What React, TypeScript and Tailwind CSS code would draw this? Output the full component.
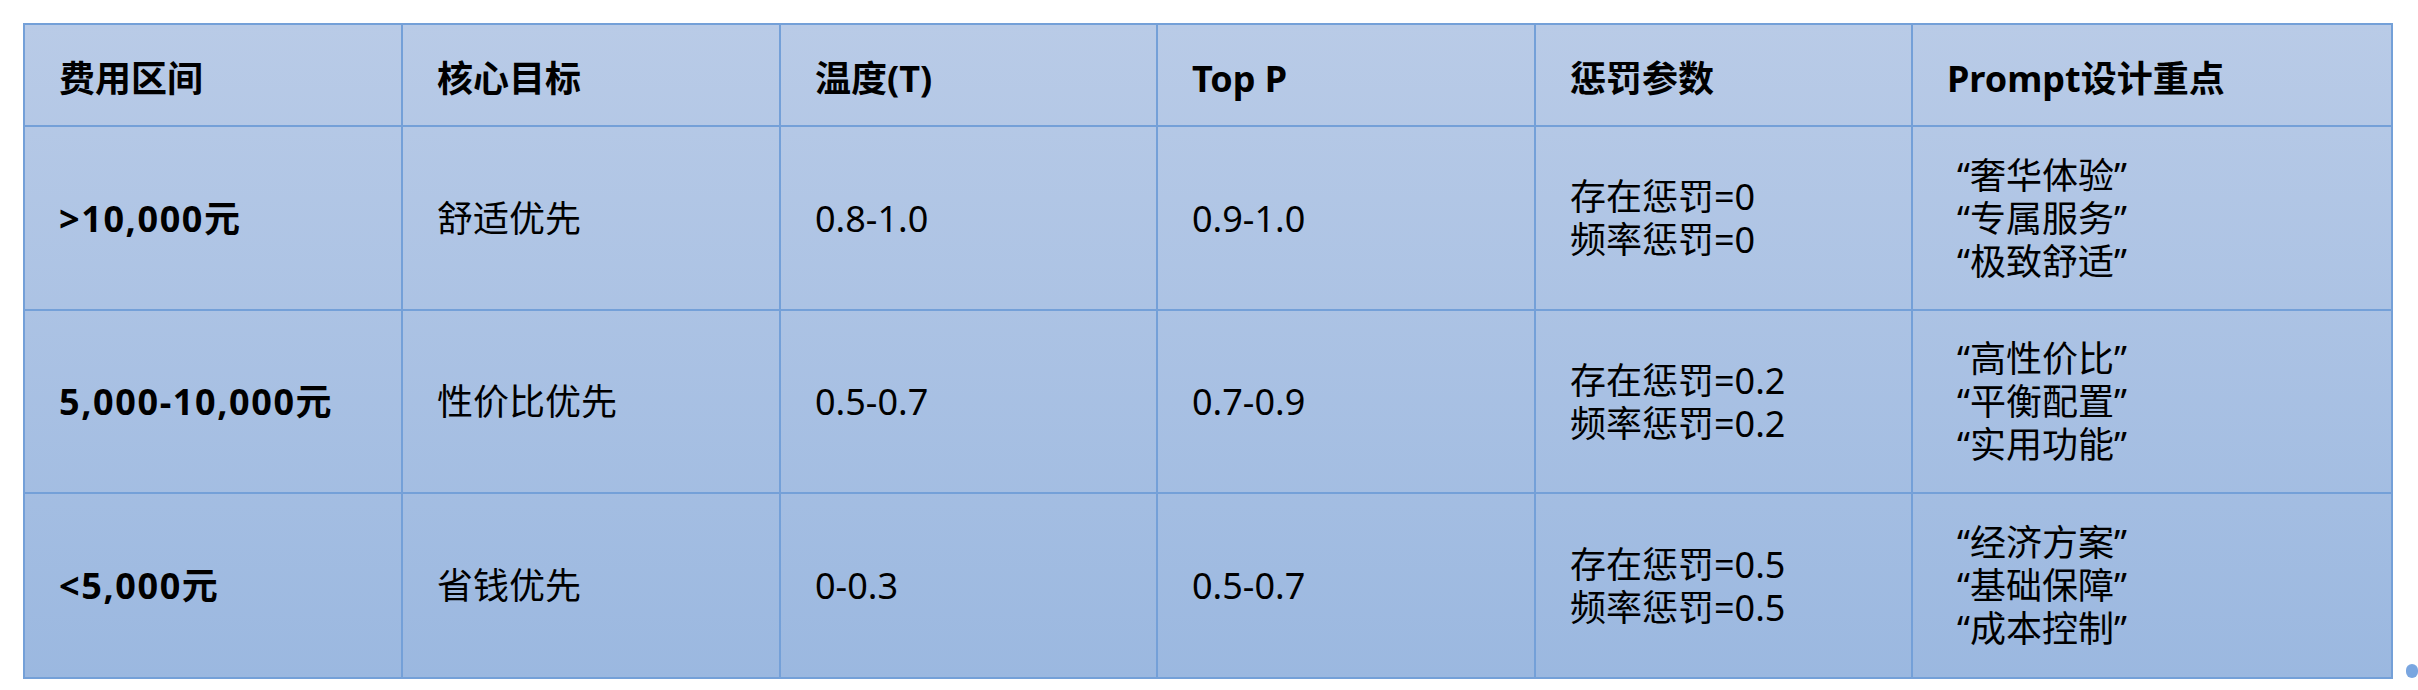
import React from "react";

const headers = ["费用区间", "核心目标", "温度(T)", "Top P", "惩罚参数", "Prompt设计重点"];

const rows = [
  {
    range: ">10,000元",
    goal: "舒适优先",
    temp: "0.8-1.0",
    topP: "0.9-1.0",
    penalty: ["存在惩罚=0", "频率惩罚=0"],
    prompt: ["“奢华体验”", "“专属服务”", "“极致舒适”"],
    h: "h-[184px]",
  },
  {
    range: "5,000-10,000元",
    goal: "性价比优先",
    temp: "0.5-0.7",
    topP: "0.7-0.9",
    penalty: ["存在惩罚=0.2", "频率惩罚=0.2"],
    prompt: ["“高性价比”", "“平衡配置”", "“实用功能”"],
    h: "h-[183px]",
  },
  {
    range: "<5,000元",
    goal: "省钱优先",
    temp: "0-0.3",
    topP: "0.5-0.7",
    penalty: ["存在惩罚=0.5", "频率惩罚=0.5"],
    prompt: ["“经济方案”", "“基础保障”", "“成本控制”"],
    h: "h-[185px]",
  },
];

const cell = "border-2 border-[#74a0d8] pl-[34px] align-middle";

export default function App() {
  return (
    <div className="w-[2418px] h-[690px] overflow-hidden bg-white flex items-start pt-[23px] pl-[23px] font-['Noto_Sans','Noto_Sans_CJK_SC',sans-serif] text-black">
      <table className="table-fixed border-collapse w-[2380px] bg-linear-to-b from-[#b9cbe7] to-[#9bb8e0] text-[36px] leading-[43px]">
        <colgroup>
          <col className="w-[378px]" />
          <col className="w-[378px]" />
          <col className="w-[377px]" />
          <col className="w-[378px]" />
          <col className="w-[377px]" />
          <col />
        </colgroup>
        <thead>
          <tr className="h-[102px]">
            {headers.map((h) => (
              <th key={h} className={`${cell} text-left font-bold pt-[6px]`}>
                {h}
              </th>
            ))}
          </tr>
        </thead>
        <tbody>
          {rows.map((r) => (
            <tr key={r.range} className={r.h}>
              <td className={`${cell} font-bold tracking-[1.6px]`}>{r.range}</td>
              <td className={cell}>{r.goal}</td>
              <td className={cell}>{r.temp}</td>
              <td className={cell}>{r.topP}</td>
              <td className={cell}>
                {r.penalty.map((p) => (
                  <div key={p}>{p}</div>
                ))}
              </td>
              <td className={`${cell} !pl-[44px]`}>
                {r.prompt.map((p) => (
                  <div key={p}>{p}</div>
                ))}
              </td>
            </tr>
          ))}
        </tbody>
      </table>
      <span className="self-end mb-[12px] ml-[13px] w-[12px] h-[14px] shrink-0 rounded-full bg-[#7aa6e0]" />
    </div>
  );
}
